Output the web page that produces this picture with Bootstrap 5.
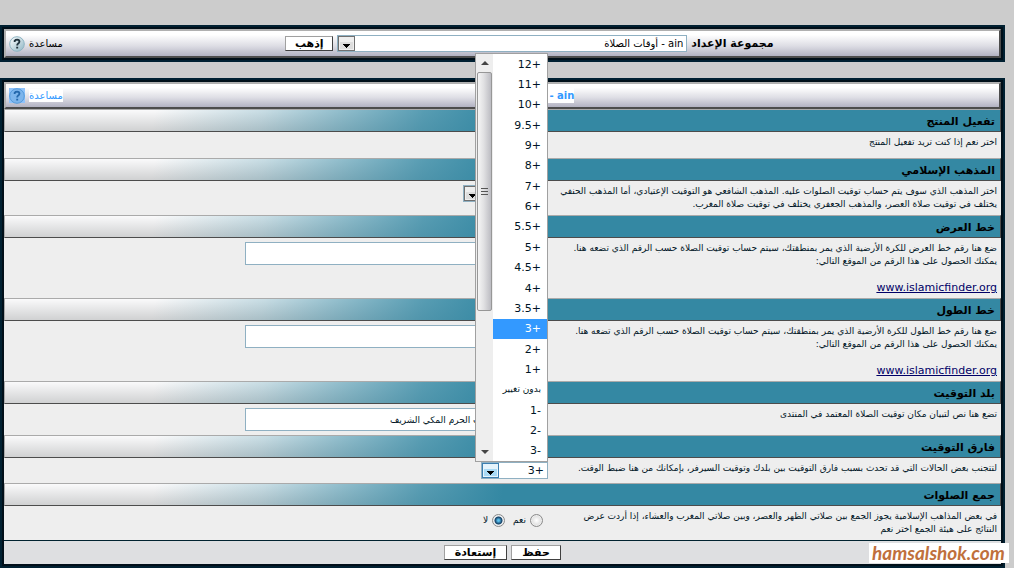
<!DOCTYPE html>
<html lang="ar" dir="rtl">
<head>
<meta charset="utf-8">
<meta name="viewport" content="width=device-width, initial-scale=1">
<title>أوقات الصلاة</title>
<link href="https://cdn.jsdelivr.net/npm/bootstrap@5.3.0/dist/css/bootstrap.min.css" rel="stylesheet">
<style>
  body { background: #ccc; color: #001526; font: 11px/13px "DejaVu Sans", sans-serif; padding: 25px 9px 0 0; }
  .panel { border: 4px solid #000f19; outline: 2px solid #002031; outline-offset: -2px; background: #eee; }
  .panel + .panel { margin-top: 16px; }
  .titlebar { border: 2px solid; border-color: #b0b0b0 #4c4c4c #4c4c4c #b0b0b0; background: linear-gradient(#fff 15%, #dddde4 60%, #b2b2c2); color: #000; padding: 0 3px; }
  .titlebar.tall { height: 29px; }
  .titlebar.short { height: 27px; }
  .help { color: inherit; text-decoration: none; font-size: 10px; }
  .chosen { color: #39f; }
  .chosen .word { background: #fff; }
  .panel-name { font-size: 10px; font-weight: bold; }
  .panel-name .word { padding: 2px 0 2px 65px; }
  .icon { width: 16px; height: 16px; }
  .section-head { height: 23px; margin: 0; padding: 0 5px; font-size: 11px; line-height: 23px; font-weight: bold; color: #000; border: 1px solid; border-color: #aaa #4c4c4c #4c4c4c #aaa; background: linear-gradient(100deg, rgba(52,136,163,0) 15%, rgba(52,136,163,.25) 26%, rgba(52,136,163,.54) 34%, rgba(52,136,163,.82) 42%, #3488a3 50%), linear-gradient(#fafafb, #d0d1d2); }
  .section-body { padding: 4px 4px 0; }
  .desc { width: 45%; font-size: 9px; }
  .desc a { color: #006; font-size: 11px; }
  .control { width: 55%; padding: 0 4px; }
  .h26 { min-height: 26px; } .h34 { min-height: 34px; } .h60 { min-height: 60px; } .h31 { min-height: 31px; } .h25 { min-height: 25px; }
  .field { width: 303px; height: 23px; border: 1px solid #8fb0c2; padding: 0 3px; font-size: 9px; color: inherit; background: #fff; }
  .pick { appearance: none; height: 17px; border: 1px solid #8fb0c2; border-radius: 0; padding: 0 3px; color: inherit; font-size: 11px; line-height: 15px; background: #fff url("data:image/svg+xml,%3Csvg xmlns='http://www.w3.org/2000/svg' width='17' height='15'%3E%3Crect x='.5' y='.5' width='16' height='14' fill='%23eee' stroke='%23707070'/%3E%3Crect x='2' y='6' width='13' height='7' fill='%23ddd'/%3E%3Cpath d='M5 8h7v1h-1v1h-1v1h-1v1h-1v-1h-1v-1h-1v-1h-1z'/%3E%3C/svg%3E") no-repeat left top; }
  .pick.open { background-image: url("data:image/svg+xml,%3Csvg xmlns='http://www.w3.org/2000/svg' width='17' height='15'%3E%3Crect x='.5' y='.5' width='16' height='14' fill='%23e5f4fc' stroke='%233c7fb1'/%3E%3Crect x='2' y='6' width='13' height='7' fill='%23a9daf5'/%3E%3Cpath d='M5 8h7v1h-1v1h-1v1h-1v1h-1v-1h-1v-1h-1v-1h-1z'/%3E%3C/svg%3E"); }
  .group-pick { width: 350px; font-size: 10px; }
  .school-pick { width: 85px; }
  .offset-pick { width: 67px; }
  .push { height: 15px; padding: 0 2px; border: 1px solid; border-color: #a0a0a0 #404040 #404040 #a0a0a0; background: #fff; color: #000; font-size: 11px; line-height: 13px; font-weight: bold; overflow: hidden; }
  .push.go { width: 48px; }
  .push.save { width: 50px; }
  .push.reset { width: 63px; }
  .options { position: absolute; right: 0; bottom: 100%; width: 73px; height: 409px; border: 1px solid #a0a0a0; background: #fff; z-index: 5; }
  .options ul { flex: 1; display: grid; grid-template-rows: repeat(20, 1fr); }
  .options li { padding: 0 6px; display: flex; align-items: center; }
  .options li.on { background: #39f; color: #fff; }
  .options li.word { font-size: 9px; }
  .bar { width: 17px; flex: none; background: #eee; }
  .thumb { height: 239px; margin: 0 1px; border: 1px solid #979797; border-radius: 2px; background: linear-gradient(90deg, #f5f5f5, #e0e0e2 45%, #bcbcc2); }
  .control.radios { padding: 0 9px; }
  .radios label { font-size: 9px; }
  .radios input { appearance: none; width: 13px; height: 13px; margin: 0; border: 1px solid #8a8a8a; border-radius: 50%; background: radial-gradient(#fff, #ccc); box-shadow: inset 0 0 0 1px #eee; }
  .radios input:checked { background: radial-gradient(#5cc3f0 10%, #123d63 45%, #e8eef2 58%); }
  .footer { height: 24px; border-top: 1px solid #00222f; background: #dedfe1; }
  .mark-site { position: absolute; left: 869px; top: 543px; width: 140px; height: 20px; background: #fff; color: #c0703c; font: italic bold 19px/19px Lato, sans-serif; direction: ltr; padding: 0 3px; }
</style>
</head>
<body class="position-relative">

<form class="panel">
  <div class="titlebar tall d-flex align-items-center">
    <div class="flex-grow-1 d-flex justify-content-center align-items-center gap-1">
      <label for="group" class="fw-bold">مجموعة الإعداد</label>
      <select id="group" class="pick group-pick"><option>ain - أوقات الصلاة</option></select>
      <button type="button" class="push go">إذهب</button>
    </div>
    <a href="#" class="help d-flex align-items-center gap-1"><span>مساعدة</span>
      <svg class="icon" viewBox="0 0 16 16"><defs><linearGradient id="ball" x2="1" y2="1"><stop stop-color="#fff"/><stop offset="1" stop-color="#8fb6c4"/></linearGradient></defs><circle cx="8" cy="8" r="7.3" fill="url(#ball)" stroke="#8db4c2"/><path d="M5.7 6V4.7Q6.5 3.6 8.2 3.6 10.4 3.7 10.4 5.7 10.3 7 9 7.7 8.2 8.2 8.2 9.4M8.2 10.8v1.8" fill="none" stroke="#20323c" stroke-width="1.9"/></svg></a>
  </div>
</form>

<form class="panel">
  <div class="titlebar short d-flex align-items-center">
    <div class="flex-grow-1 text-center panel-name chosen"><span class="word">ain -</span></div>
    <a href="#" class="help chosen d-flex align-items-center gap-1"><span class="word">مساعدة</span>
      <svg class="icon" viewBox="0 0 16 16"><path d="M0 0h16v15H0z" fill="#8fc3fb"/><circle cx="8" cy="8" r="7.3" fill="#7db5ec" stroke="#559ada"/><path d="M5.7 6V4.7Q6.5 3.6 8.2 3.6 10.4 3.7 10.4 5.7 10.3 7 9 7.7 8.2 8.2 8.2 9.4M8.2 10.8v1.8" fill="none" stroke="#2468ac" stroke-width="1.9"/></svg></a>
  </div>

  <h2 class="section-head">تفعيل المنتج</h2>
  <div class="section-body h26 d-flex"><div class="desc">اختر نعم إذا كنت تريد تفعيل المنتج</div></div>

  <h2 class="section-head">المذهب الإسلامي</h2>
  <div class="section-body h34 d-flex">
    <label class="desc text-nowrap" for="school">اختر المذهب الذي سوف يتم حساب توقيت الصلوات عليه. المذهب الشافعي هو التوقيت الإعتيادي، أما المذهب الحنفي<br>يختلف في توقيت صلاة العصر، والمذهب الجعفري يختلف في توقيت صلاة المغرب.</label>
    <div class="control"><select id="school" class="pick school-pick"><option></option></select></div>
  </div>

  <h2 class="section-head">خط العرض</h2>
  <div class="section-body h60 d-flex">
    <div class="desc text-nowrap"><label for="lat">ضع هنا رقم خط العرض للكرة الأرضية الذي يمر بمنطقتك، سيتم حساب توقيت الصلاة حسب الرقم الذي تضعه هنا.<br>يمكنك الحصول على هذا الرقم من الموقع التالي:</label><br><br><a href="#">www.islamicfinder.org</a></div>
    <div class="control"><input id="lat" type="text" class="field"></div>
  </div>

  <h2 class="section-head">خط الطول</h2>
  <div class="section-body h60 d-flex">
    <div class="desc text-nowrap"><label for="lng">ضع هنا رقم خط الطول للكرة الأرضية الذي يمر بمنطقتك، سيتم حساب توقيت الصلاة حسب الرقم الذي تضعه هنا.<br>يمكنك الحصول على هذا الرقم من الموقع التالي:</label><br><br><a href="#">www.islamicfinder.org</a></div>
    <div class="control"><input id="lng" type="text" class="field"></div>
  </div>

  <h2 class="section-head">بلد التوقيت</h2>
  <div class="section-body h31 d-flex">
    <label class="desc" for="place">تضع هنا نص لتبيان مكان توقيت الصلاة المعتمد في المنتدى</label>
    <div class="control"><input id="place" type="text" class="field" value="مكة المكرمة بقرب الحرم المكي الشريف"></div>
  </div>

  <h2 class="section-head">فارق التوقيت</h2>
  <div class="section-body h25 d-flex">
    <label class="desc text-nowrap" for="offset">لتتجنب بعض الحالات التي قد تحدث بسبب فارق التوقيت بين بلدك وتوقيت السيرفر، بإمكانك من هنا ضبط الوقت.</label>
    <div class="control">
      <div class="position-relative d-flex">
        <select id="offset" class="pick open offset-pick"><option>+3</option></select>
        <div class="options d-flex">
          <ul class="list-unstyled m-0 p-0">
            <li>+12</li><li>+11</li><li>+10</li><li>+9.5</li><li>+9</li><li>+8</li><li>+7</li><li>+6</li><li>+5.5</li><li>+5</li><li>+4.5</li><li>+4</li><li>+3.5</li><li class="on">+3</li><li>+2</li><li>+1</li><li class="word text-nowrap">بدون تغيير</li><li>-1</li><li>-2</li><li>-3</li>
          </ul>
          <div class="bar d-flex flex-column">
            <svg width="17" height="18"><path d="M5 11h8L9 7z" fill="#444"/></svg>
            <div class="thumb d-flex align-items-center justify-content-center"><svg width="7" height="8"><path d="M0 .5h7M0 3.5h7M0 6.5h7" stroke="#555"/></svg></div>
            <svg class="mt-auto" width="17" height="17"><path d="M5 6h8L9 10z" fill="#444"/></svg>
          </div>
        </div>
      </div>
    </div>
  </div>

  <h2 class="section-head">جمع الصلوات</h2>
  <div class="section-body h34 d-flex">
    <div class="desc text-nowrap">في بعض المذاهب الإسلامية يجوز الجمع بين صلاتي الظهر والعصر، وبين صلاتي المغرب والعشاء، إذا أردت عرض<br>النتائج على هيئة الجمع اختر نعم</div>
    <div class="control radios d-flex align-items-start pt-1 gap-2">
      <label class="d-flex align-items-center gap-1"><input type="radio" name="join">نعم</label>
      <label class="d-flex align-items-center gap-1"><input type="radio" name="join" checked>لا</label>
    </div>
  </div>

  <div class="footer d-flex justify-content-center align-items-center gap-1">
    <button type="button" class="push save">حفظ</button>
    <button type="button" class="push reset">إستعادة</button>
  </div>
</form>

<div class="mark-site">hamsalshok.com</div>
<script src="https://cdn.jsdelivr.net/npm/bootstrap@5.3.0/dist/js/bootstrap.bundle.min.js"></script>
</body>
</html>
